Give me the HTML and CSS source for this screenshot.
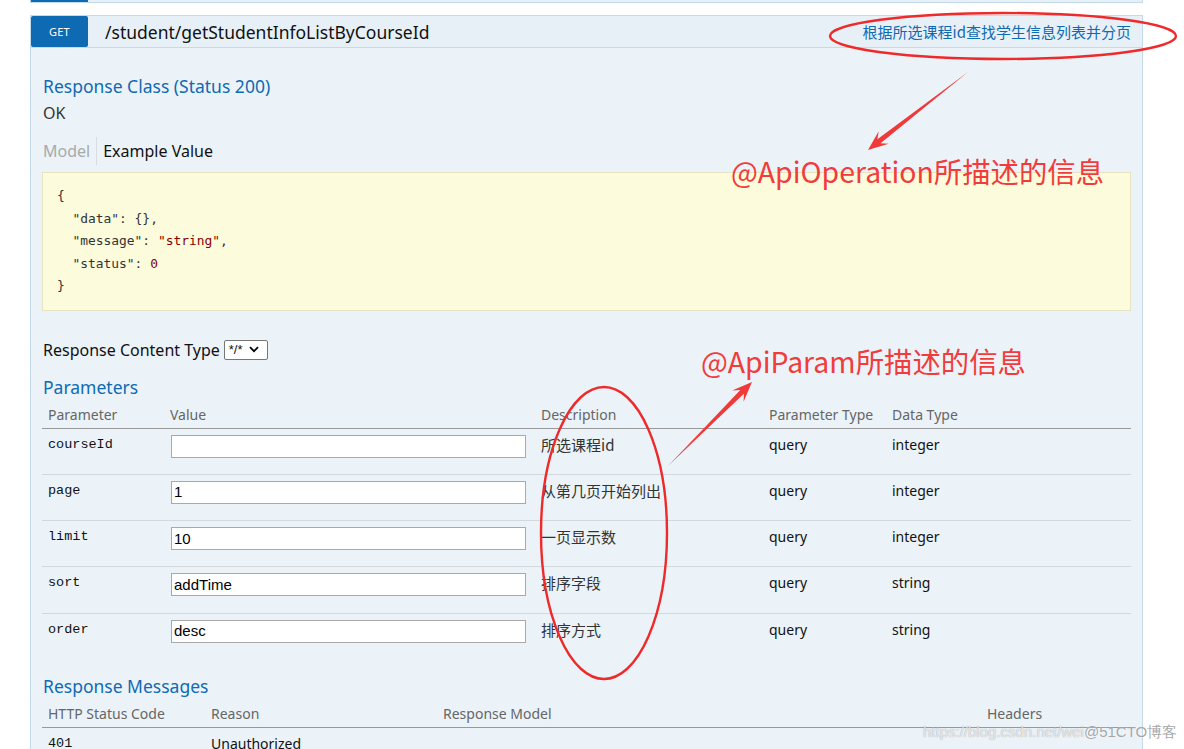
FILE: index.html
```html
<!DOCTYPE html>
<html lang="zh">
<head>
<meta charset="utf-8">
<title>Swagger</title>
<link rel="stylesheet" href="styles.css">
</head>
<body>
<div class="page">
  <div class="prev"><span class="prev-badge"></span></div>
  <div class="op">
    <div class="op-heading">
      <span class="method">GET</span>
      <span class="path">/student/getStudentInfoListByCourseId</span>
      <span class="summary">根据所选课程id查找学生信息列表并分页</span>
    </div>
    <div class="op-content">
      <h4 class="h4 h-class">Response Class (Status 200)</h4>
      <div class="ok">OK</div>
      <div class="tabs"><span class="tab-model">Model</span><span class="tab-example">Example Value</span></div>
      <pre class="json">{
  "data": {},
  "message": <span class="str">"string"</span>,
  "status": <span class="num">0</span>
}</pre>
      <div class="ctype">Response Content Type <span class="select">*/* <svg class="chev" width="10" height="7" viewBox="0 0 10 7"><path d="M1 1.2 L5 5.2 L9 1.2" fill="none" stroke="#000" stroke-width="1.8"/></svg></span></div>
      <h4 class="h4 h-params">Parameters</h4>
      <table class="ptable">
        <colgroup><col class="c1"><col class="c2"><col class="c3"><col class="c4"><col class="c5"></colgroup>
        <thead>
          <tr><th>Parameter</th><th>Value</th><th>Description</th><th>Parameter Type</th><th>Data Type</th></tr>
        </thead>
        <tbody>
          <tr><td class="code">courseId</td><td><span class="input"></span></td><td class="desc">所选课程id</td><td>query</td><td>integer</td></tr>
          <tr><td class="code">page</td><td><span class="input">1</span></td><td class="desc">从第几页开始列出</td><td>query</td><td>integer</td></tr>
          <tr><td class="code">limit</td><td><span class="input">10</span></td><td class="desc">一页显示数</td><td>query</td><td>integer</td></tr>
          <tr><td class="code">sort</td><td><span class="input">addTime</span></td><td class="desc">排序字段</td><td>query</td><td>string</td></tr>
          <tr><td class="code">order</td><td><span class="input">desc</span></td><td class="desc">排序方式</td><td>query</td><td>string</td></tr>
        </tbody>
      </table>
      <h4 class="h4 h-msgs">Response Messages</h4>
      <table class="mtable">
        <colgroup><col class="m1"><col class="m2"><col class="m3"><col class="m4"></colgroup>
        <thead>
          <tr><th>HTTP Status Code</th><th>Reason</th><th>Response Model</th><th>Headers</th></tr>
        </thead>
        <tbody>
          <tr><td class="code">401</td><td>Unauthorized</td><td></td><td></td></tr>
        </tbody>
      </table>
    </div>
  </div>
</div>

<svg class="marks" width="1184" height="749" viewBox="0 0 1184 749">
  <ellipse cx="1003" cy="36" rx="173" ry="23" fill="none" stroke="#ee2a2a" stroke-width="2.4"/>
  <polygon points="968,72 880.6,143.3 888.7,143.8 868,150 878.7,131.2 877.4,139.3" fill="#f03a3a"/>
  <ellipse cx="604" cy="533" rx="63" ry="146" fill="none" stroke="#ee2a2a" stroke-width="2.4"/>
  <polygon points="668,466 743.9,393.7 743.6,401.8 752,382 732.2,390.4 740.3,390.1" fill="#f03a3a"/>
</svg>
<div class="note note-op">@ApiOperation所描述的信息</div>
<div class="note note-param">@ApiParam所描述的信息</div>
<div class="watermark"><span class="wm-url">https://blog.csdn.net/wei</span><span class="wm-brand">@51CTO博客</span></div>
</body>
</html>
```

FILE: styles.css
```css
html, body {
  margin: 0;
  padding: 0;
  background: #ffffff;
}
body {
  width: 1184px;
  height: 749px;
  overflow: hidden;
  position: relative;
  font-family: "Noto Sans", "Open Sans", "Noto Sans CJK SC", sans-serif;
  color: #222;
}
.page {
  margin-left: 30px;
  width: 1113px;
  height: 749px;
  overflow: hidden;
}
.prev {
  height: 2px;
  background: #e7f0f7;
  border: 1px solid #c3d9ec;
  border-top: none;
  display: flex;
}
.prev-badge {
  width: 57px;
  height: 2px;
  background: #0f6ab4;
}
.op {
  margin-top: 12px;
}
.op-heading {
  height: 31px;
  border: 1px solid #c3d9ec;
  background: #e7f0f7;
  display: flex;
  align-items: center;
}
.method {
  width: 57px;
  height: 31px;
  background: #0f6ab4;
  color: #fff;
  font-size: 11px;
  border-radius: 2px;
  display: flex;
  align-items: center;
  justify-content: center;
  letter-spacing: 0.2px;
}
.path {
  margin-left: 17px;
  font-size: 17.5px;
  color: #111;
  flex: 1;
}
.summary {
  font-family: "Noto Sans CJK SC", sans-serif;
  font-size: 15px;
  color: #0f6ab4;
  margin-right: 11px;
}
.op-content {
  background: #ebf3f9;
  border: 1px solid #c3d9ec;
  border-top: none;
  padding: 1px 11px 0 11px;
  height: 712px;
  box-sizing: border-box;
}
.h4 {
  margin: 0;
  font-weight: normal;
  font-size: 17.5px;
  line-height: 24px;
  color: #0f6ab4;
  padding-left: 1px;
}
.h-class {
  margin-top: 25px;
}
.ok {
  margin-top: 4px;
  font-size: 16px;
  line-height: 22px;
  color: #333;
  padding-left: 1px;
}
.tabs {
  margin-top: 13px;
  display: flex;
  height: 28px;
  align-items: center;
  font-size: 16px;
  padding-left: 1px;
}
.tab-model {
  color: #a9a9a9;
  padding-right: 6px;
  border-right: 1px solid #d6dde3;
  line-height: 28px;
}
.tab-example {
  color: #111;
  padding-left: 6px;
}
.json {
  margin: 7px 0 0 0;
  background: #fcfbdc;
  border: 1px solid #e6e3c2;
  padding: 12px 14px 12px 14px;
  font-family: "DejaVu Sans Mono", "Liberation Mono", monospace;
  font-size: 12.9px;
  line-height: 22.5px;
  color: #333;
}
.json .str,
.json .num {
  color: #880000;
}
.ctype {
  margin-top: 28px;
  font-size: 16px;
  line-height: 22px;
  color: #111;
  display: flex;
  align-items: center;
  padding-left: 1px;
}
.select {
  margin-left: 4px;
  height: 20px;
  width: 44px;
  box-sizing: border-box;
  border: 1px solid #767676;
  border-radius: 2px;
  background: #fff;
  font-family: "Liberation Sans", sans-serif;
  font-size: 13px;
  display: flex;
  align-items: center;
  padding-left: 4px;
  gap: 6px;
}
.h-params {
  margin-top: 14px;
}
table {
  border-collapse: collapse;
  table-layout: fixed;
  width: 1089px;
}
col.c1 { width: 122px; }
col.c2 { width: 371px; }
col.c3 { width: 228px; }
col.c4 { width: 123px; }
col.c5 { width: 245px; }
col.m1 { width: 163px; }
col.m2 { width: 232px; }
col.m3 { width: 544px; }
col.m4 { width: 150px; }
th {
  text-align: left;
  font-weight: normal;
  color: #666;
  font-size: 14px;
  line-height: 20px;
  padding: 6px 6px 3px 6px;
  border-bottom: 1px solid #999;
}
td {
  vertical-align: top;
  font-size: 14px;
  line-height: 20px;
  padding: 6px 6px 16.3px 6px;
  border-top: 1px solid #d3d8dc;
  color: #111;
}
.ptable tbody tr:first-child td {
  border-top: none;
}
td.code {
  font-family: "Liberation Mono", "DejaVu Sans Mono", monospace;
  font-size: 13.5px;
  color: #111;
}
td.desc {
  font-family: "Noto Sans CJK SC", sans-serif;
  font-size: 15px;
  color: #333;
}
.input {
  display: flex;
  align-items: center;
  box-sizing: border-box;
  margin-left: 1px;
  width: 355px;
  height: 23px;
  border: 1px solid #a9a9a9;
  background: #fff;
  font-family: "Liberation Sans", Arial, sans-serif;
  font-size: 15px;
  color: #000;
  padding-left: 2px;
}
.h-msgs {
  margin-top: 15px;
}
.mtable td {
  padding-top: 6px;
}
.marks {
  position: absolute;
  left: 0;
  top: 0;
  pointer-events: none;
}
.note {
  position: absolute;
  font-family: "Noto Sans CJK SC", sans-serif;
  font-size: 28.4px;
  line-height: 36px;
  color: #f23b3b;
  white-space: nowrap;
}
.note-op {
  left: 731px;
  top: 153px;
}
.note-param {
  left: 701px;
  top: 343px;
}
.watermark {
  position: absolute;
  left: 923px;
  top: 722px;
  font-family: "Liberation Sans", Arial, sans-serif;
  font-size: 15px;
  line-height: 20px;
  white-space: nowrap;
}
.wm-url {
  color: rgba(255, 255, 255, 0.75);
  text-shadow: 0 0 1px rgba(120, 120, 120, 0.8);
}
.wm-brand {
  color: rgba(150, 150, 150, 0.85);
  text-shadow: 0 0 1px rgba(255, 255, 255, 0.8);
}
```
